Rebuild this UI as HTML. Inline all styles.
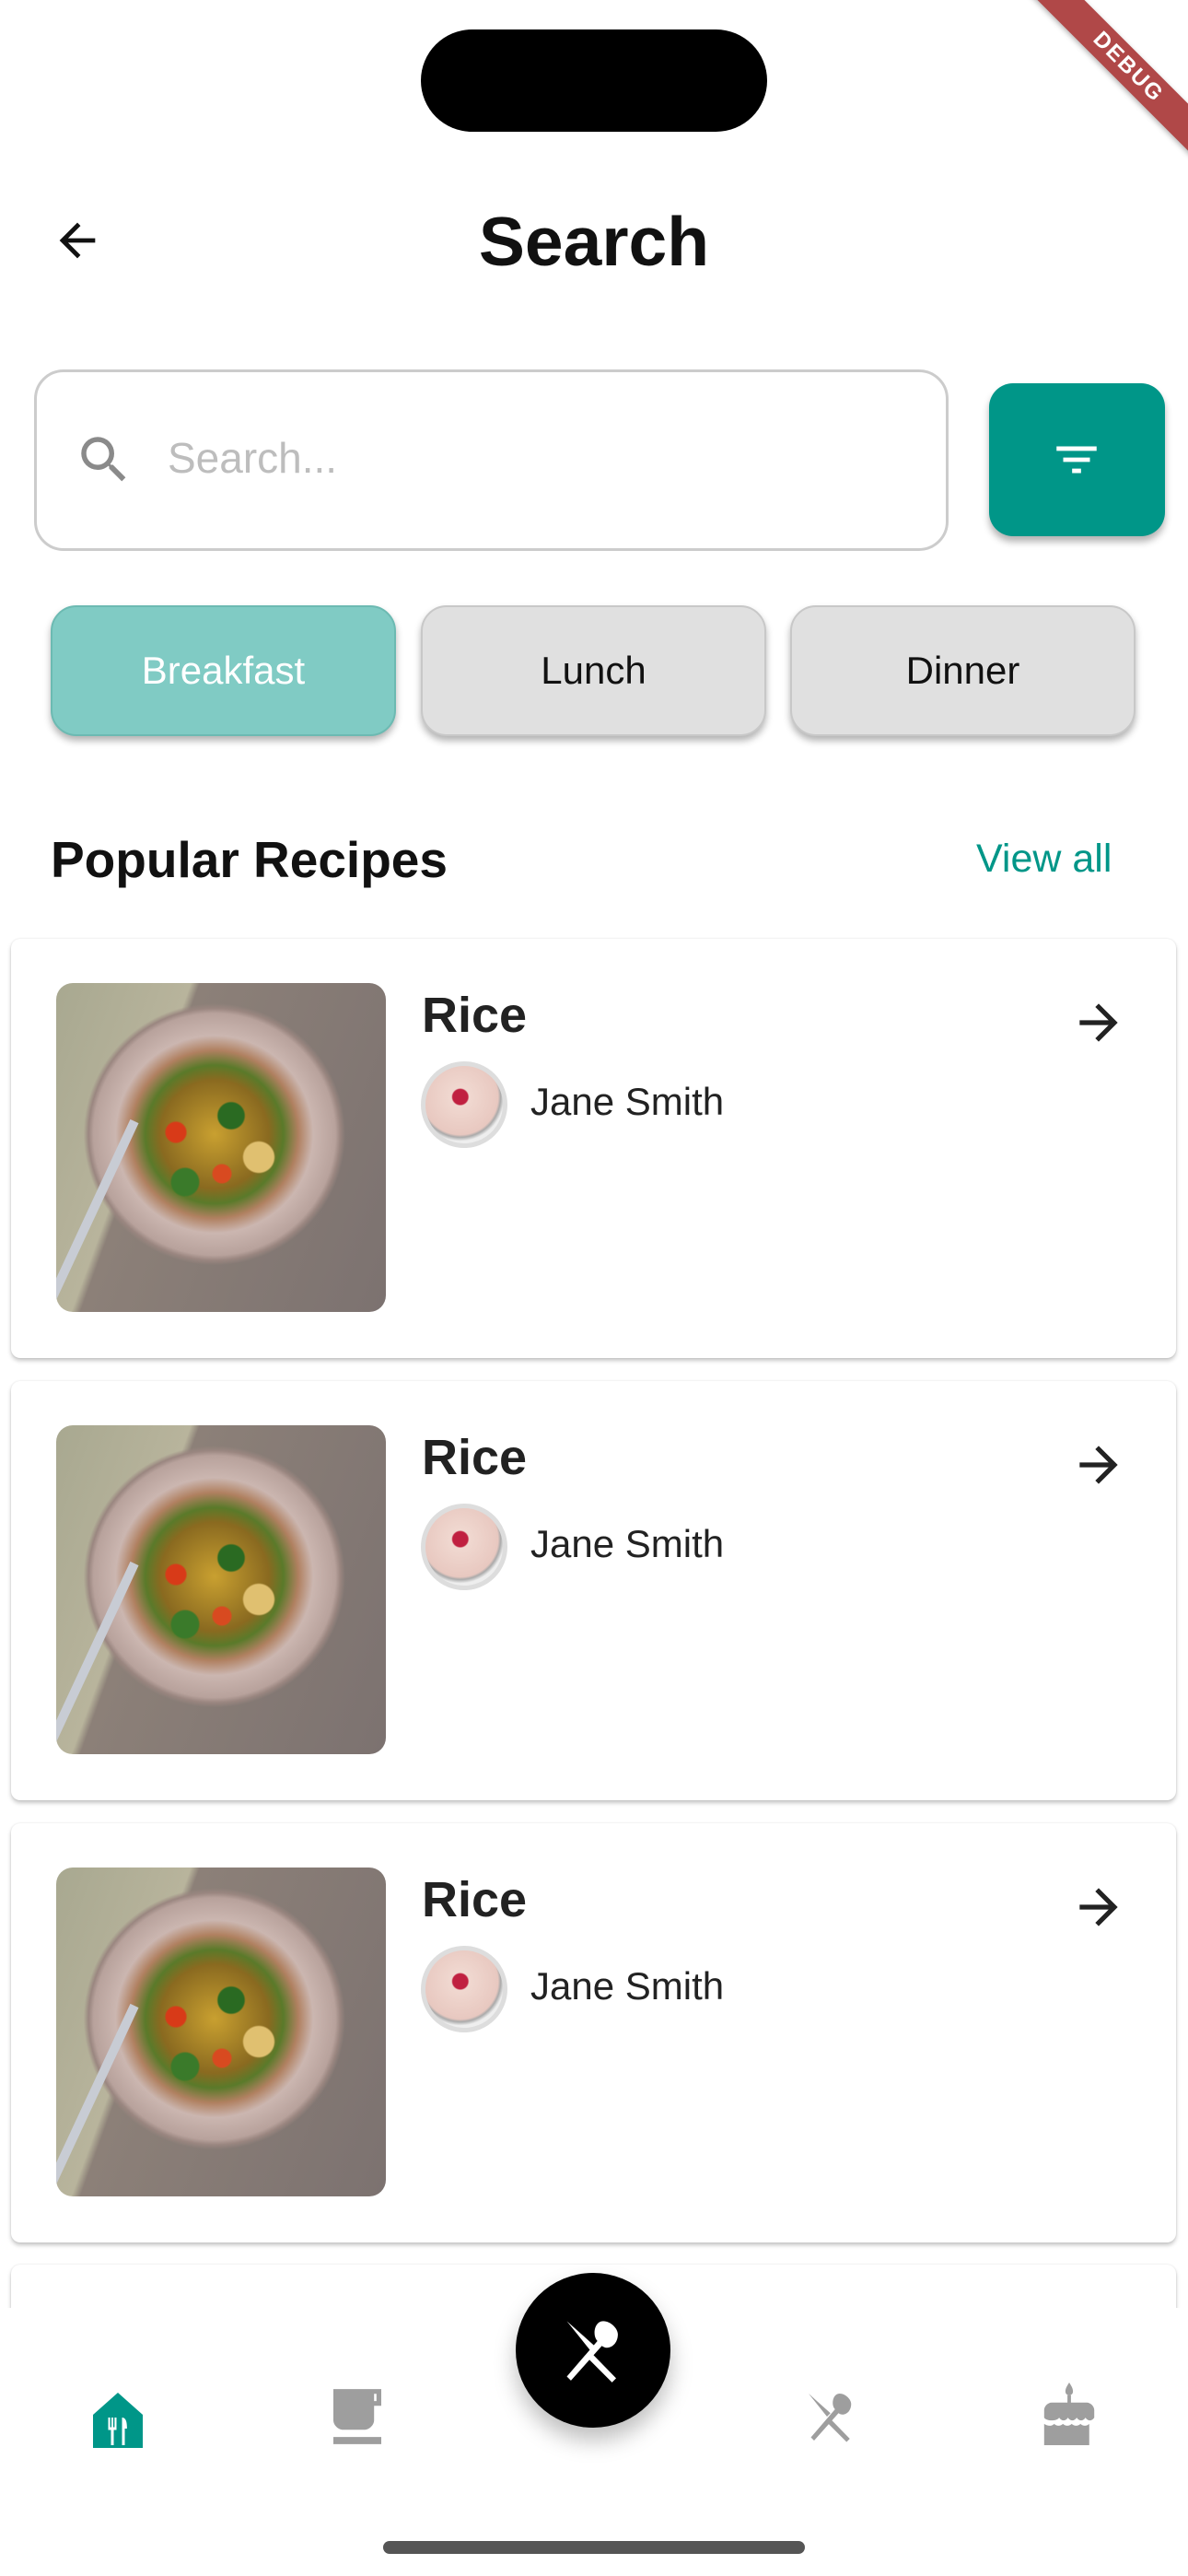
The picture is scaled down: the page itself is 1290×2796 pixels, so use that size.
<!DOCTYPE html>
<html style="width:1290px;height:2796px;overflow:hidden"><head><meta charset="utf-8"><style>
*{margin:0;padding:0;box-sizing:border-box}
body{width:1290px;height:2796px;background:#fff;position:relative;overflow:hidden;font-family:"Liberation Sans",sans-serif}
.abs{position:absolute}
.island{left:457px;top:32px;width:376px;height:111px;border-radius:56px;background:#000}
.title{left:0;width:1290px;top:219px;text-align:center;font-size:75px;font-weight:bold;color:#111}
.search{left:37px;top:401px;width:993px;height:197px;border:3px solid #ccc;border-radius:32px}
.filter{left:1074px;top:416px;width:191px;height:166px;border-radius:26px;background:#009688;box-shadow:0 6px 8px rgba(0,0,0,.3)}
.chip{top:657px;height:142px;width:375px;border-radius:28px;background:#e0e0e0;box-shadow:0 5px 8px rgba(0,0,0,.3);border:2px solid #c8c8c8;text-align:center;line-height:138px;font-size:42px;color:#111}
.card{left:12px;width:1265px;height:455px;background:#fff;border-radius:10px;box-shadow:0 3px 5px rgba(0,0,0,.22),0 0 2px rgba(0,0,0,.1)}
.img{left:49px;top:48px;width:358px;height:357px;border-radius:18px;overflow:hidden;
background:radial-gradient(circle at 48% 46%,#c9a030 0,#8a6a20 22%,#5a7a2a 28%,#b08060 34%,#cbb6b0 40%,#b8a29c 49%,#9a8680 51%,transparent 53%),
linear-gradient(110deg,#a8a890 0,#b8b49c 30%,#8c8078 32%,#7c7270 100%)}
.img:before{content:"";position:absolute;left:70px;top:90px;width:200px;height:180px;border-radius:50%;
background:radial-gradient(circle at 30% 40%,#d83a18 0 6%,transparent 7%),radial-gradient(circle at 60% 30%,#2a6a22 0 8%,transparent 9%),radial-gradient(circle at 55% 65%,#d84a20 0 6%,transparent 7%),radial-gradient(circle at 35% 70%,#3a7a2a 0 8%,transparent 9%),radial-gradient(circle at 75% 55%,#e0c070 0 9%,transparent 10%)}
.img:after{content:"";position:absolute;left:80px;top:150px;width:10px;height:220px;background:#c8ccd4;transform:rotate(25deg);transform-origin:top}
.rice{left:446px;top:52px;font-size:54px;font-weight:bold;color:#222}
.av{left:445px;top:133px;width:94px;height:94px;border-radius:50%;border:5px solid #ddd;background:radial-gradient(circle at 45% 40%,#c02040 0 12%,#f0d8d0 14%,#e8c8c0 60%,#aaa 64%,#eee 70%)}
.jane{left:564px;top:153px;font-size:42px;color:#222}
.arr{left:1150px;top:60px}
.nav{left:0;top:2505px;width:1290px;height:291px;background:#fff}
.fab{left:560px;top:2467px;width:168px;height:168px;border-radius:50%;background:#000;box-shadow:0 14px 24px rgba(0,0,0,.25)}
.bar{left:416px;top:2758px;width:458px;height:14px;border-radius:7px;background:#555}
.debug{left:1075px;top:55px;width:300px;height:36px;background:#b04848;transform:rotate(45deg);color:#fff;font-weight:bold;font-size:24px;text-align:center;line-height:36px;letter-spacing:2px;box-shadow:0 2px 6px rgba(0,0,0,.3)}
</style></head><body>
<div class="abs island"></div>
<svg class="abs" style="left:55px;top:232px" width="58" height="58" viewBox="0 0 24 24"><path d="M20 11H7.83l5.59-5.59L12 4l-8 8 8 8 1.41-1.41L7.83 13H20v-2z" fill="#111"/></svg>
<div class="abs title">Search</div>
<div class="abs search">
<svg class="abs" style="left:40px;top:62px" width="66" height="66" viewBox="0 0 24 24"><path d="M15.5 14h-.79l-.28-.27A6.47 6.47 0 0016 9.5 6.5 6.5 0 109.5 16c1.61 0 3.09-.59 4.23-1.57l.27.28v.79l5 4.99L20.49 19l-4.99-5zm-6 0C7.01 14 5 11.99 5 9.5S7.01 5 9.5 5 14 7.01 14 9.5 11.99 14 9.5 14z" fill="#8a8a8a"/></svg>
<div class="abs" style="left:142px;top:66px;font-size:46px;color:#bdbdbd">Search...</div>
</div>
<div class="abs filter"><svg class="abs" style="left:66px;top:54px" width="58" height="58" viewBox="0 0 24 24"><path d="M10 18h4v-2h-4v2zM3 6v2h18V6H3zm3 7h12v-2H6v2z" fill="#fff"/></svg></div>
<div class="abs chip" style="left:55px;background:#80cbc4;color:#fff;border-color:#6cbab2">Breakfast</div>
<div class="abs chip" style="left:457px">Lunch</div>
<div class="abs chip" style="left:858px">Dinner</div>
<div class="abs" style="left:55px;top:901px;font-size:55px;font-weight:bold;color:#111">Popular Recipes</div>
<div class="abs" style="left:1060px;top:908px;font-size:43px;color:#009688">View all</div>

<div class="abs card" style="top:1019px"><div class="abs img"></div><div class="abs rice">Rice</div><div class="abs av"></div><div class="abs jane">Jane Smith</div><svg class="abs arr" width="62" height="62" viewBox="0 0 24 24"><path d="M12 4l-1.41 1.41L16.17 11H4v2h12.17l-5.58 5.59L12 20l8-8z" fill="#222"/></svg></div>
<div class="abs card" style="top:1499px"><div class="abs img"></div><div class="abs rice">Rice</div><div class="abs av"></div><div class="abs jane">Jane Smith</div><svg class="abs arr" width="62" height="62" viewBox="0 0 24 24"><path d="M12 4l-1.41 1.41L16.17 11H4v2h12.17l-5.58 5.59L12 20l8-8z" fill="#222"/></svg></div>
<div class="abs card" style="top:1979px"><div class="abs img"></div><div class="abs rice">Rice</div><div class="abs av"></div><div class="abs jane">Jane Smith</div><svg class="abs arr" width="62" height="62" viewBox="0 0 24 24"><path d="M12 4l-1.41 1.41L16.17 11H4v2h12.17l-5.58 5.59L12 20l8-8z" fill="#222"/></svg></div>
<div class="abs card" style="top:2458px;height:100px"></div>

<div class="abs nav"></div>
<svg class="abs" style="left:101px;top:2597px" width="54" height="60" viewBox="0 0 18 20"><path d="M9 0L0 8v12h18V8z" fill="#009688"/><path d="M5.5 9v4.5h1V19h1v-5.5h1V9h-.7v3.5h-.5V9h-.6v3.5h-.5V9zM10.5 9c1.4 0 1.8 1.5 1.8 4h-.8v6h-1z" fill="#fff"/></svg>
<svg class="abs" style="left:362px;top:2593px" width="52" height="60" viewBox="0 0 20 23"><path d="M0 0h20v7h-3v6c0 2-2 4-4 4H4c-2 0-4-2-4-4zM17 2v3h1V2zM0 20h20v3H0z" fill="#9e9e9e"/></svg>
<svg class="abs" style="left:873px;top:2593px" width="60" height="60" viewBox="0 0 24 24"><path d="M2 2l8 10 1.5-1.5zM15.5 2c-2 0-3 2-3 4 0 1.2.4 2.2 1 2.8L3 21l1.4 1.4L15 10.5c.7.5 1.5.8 2.5.5 2-.5 3-2.5 3-4.5S18 2 15.5 2zM12 13.5l-1.5 1.5 8 8 1.4-1.4z" fill="#9e9e9e"/></svg>
<svg class="abs" style="left:1133px;top:2586px" width="56" height="68" viewBox="0 0 20 25"><path d="M10 0c-1 1.5-1.5 2.5-1.5 3.5S9 5 10 5s1.5-.5 1.5-1.5S11 1.5 10 0zM9.3 5h1.4v3H9.3zM3 8h14c1.5 0 3 1.5 3 3v3c-1 1.5-2.5 1.5-3.5 0-1 1.5-2.5 1.5-3.5 0-1 1.5-2.5 1.5-3.5 0-1 1.5-2.5 1.5-3.5 0C5 15.5 1 15.5 0 14v-3c0-1.5 1.5-3 3-3zM0 16.5c1.5 1 3 1 4 0 1 1 2.5 1 3.5 0 1 1 2.5 1 3.5 0 1 1 2.5 1 3.5 0 1 1 2.5 1 3.5 0V25H0z" fill="#9e9e9e"/></svg>
<div class="abs fab"><svg class="abs" style="left:46px;top:46px" width="76" height="76" viewBox="0 0 24 24"><path d="M3 2l8 10 1.5-1.5zM15.5 2c-2 0-3 2-3 4 0 1.2.4 2.2 1 2.8L3 21l1.4 1.4L15 10.5c.7.5 1.5.8 2.5.5 2-.5 3-2.5 3-4.5S18 2 15.5 2zM12 13.5l-1.5 1.5 8 8 1.4-1.4z" fill="#fff"/></svg></div>
<div class="abs bar"></div>
<div class="abs debug">DEBUG</div>
</body></html>
